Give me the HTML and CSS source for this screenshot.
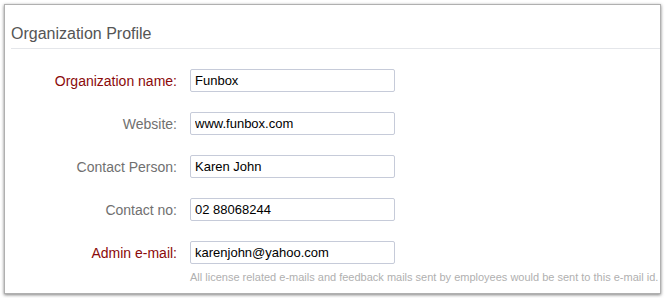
FILE: index.html
```html
<!DOCTYPE html>
<html lang="en">
<head>
  <meta charset="UTF-8">
  <title>Organization Profile</title>
  <link rel="stylesheet" href="styles.css">
</head>
<body>

<div class="panel">
  <h2 class="title">Organization Profile</h2>

  <form class="profile">
    <label class="req" for="orgName">Organization name:</label>
    <div class="field"><input id="orgName" type="text" value="Funbox"></div>

    <label for="website">Website:</label>
    <div class="field"><input id="website" type="text" value="www.funbox.com"></div>

    <label for="contact">Contact Person:</label>
    <div class="field"><input id="contact" type="text" value="Karen John"></div>

    <label for="phone">Contact no:</label>
    <div class="field"><input id="phone" type="text" value="02 88068244"></div>

    <label class="req" for="email">Admin e-mail:</label>
    <div class="field"><input id="email" type="text" value="karenjohn@yahoo.com"></div>

    <div class="hint">All license related e-mails and feedback mails sent by employees would be sent to this e-mail id.</div>
  </form>
</div>

</body>
</html>
```

FILE: styles.css
```css
* {
  box-sizing: border-box;
}

body {
  margin: 0;
  background-color: #fff;
  font-family: 'Liberation Sans', Arial, sans-serif;
}

.panel {
  margin: 4px;
  width: 657px;
  height: 290px;
  background-color: #fff;
  border: 1px solid #b0b0b0;
  box-shadow: 0 1px 3px rgba(0,0,0,0.5);
}

.title {
  margin: 0 0 0 6px;
  padding: 19px 0 4px;
  font-size: 16px;
  font-weight: normal;
  line-height: 20px;
  color: #555;
  border-bottom: 1px solid #e4e6ea;
}

.profile {
  display: grid;
  grid-template-columns: 172px auto;
  column-gap: 13px;
  row-gap: 20px;
  align-items: center;
  padding-top: 20px;
}

.profile label {
  text-align: right;
  font-size: 14px;
  color: #707070;
}

.profile label.req {
  color: #8b0a0a;
}

.field input {
  display: block;
  width: 205px;
  height: 23px;
  padding: 0 4px;
  border: 1px solid #c6cbd9;
  border-radius: 2px;
  font-family: 'Liberation Sans', Arial, sans-serif;
  font-size: 13px;
  color: #000;
  background-color: #fff;
}

.hint {
  grid-column: 2;
  margin-top: -14px;
  font-size: 11px;
  line-height: 13px;
  color: #b0b0b0;
  white-space: nowrap;
}
```
